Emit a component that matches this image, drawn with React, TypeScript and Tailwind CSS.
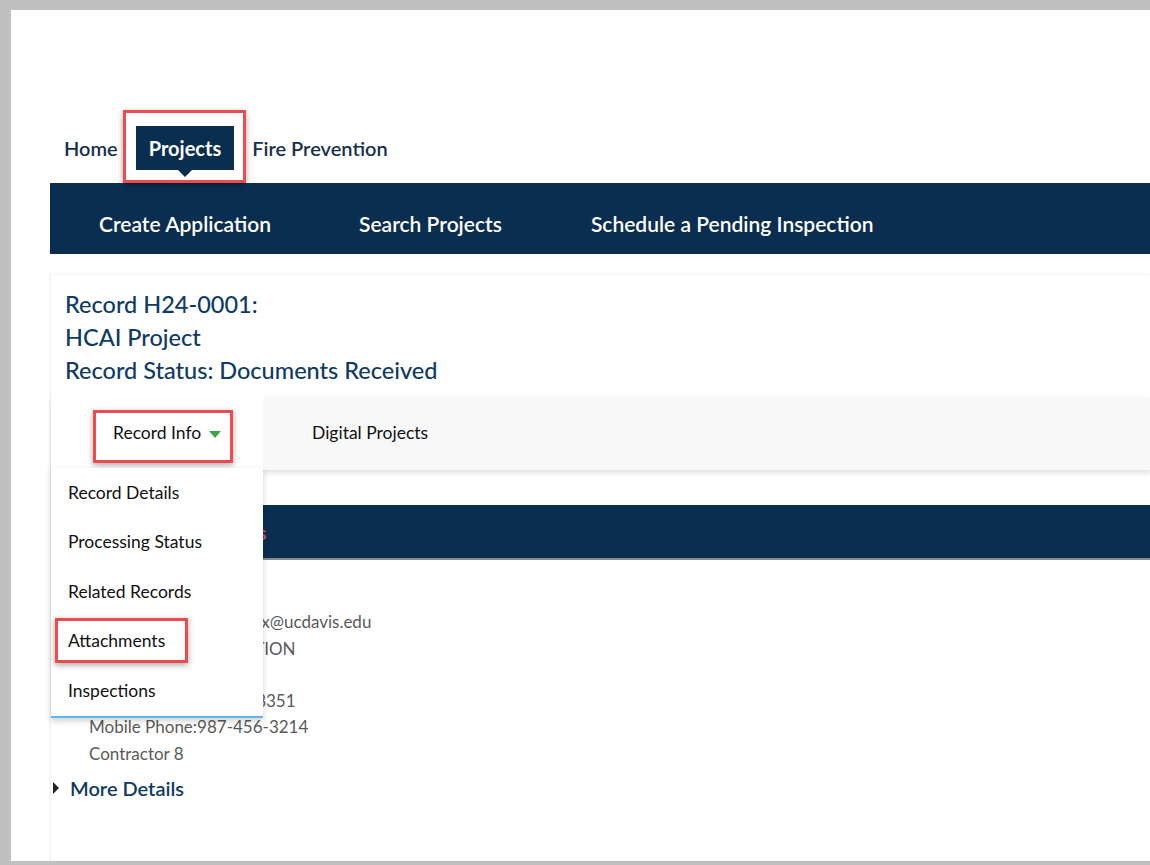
const NAVY = "bg-[#0a2e4f]";

const menuItems = [
  "Record Details",
  "Processing Status",
  "Related Records",
  "Attachments",
  "Inspections"
];

function Highlight({ className }: { className: string }) {
  return (
    <span
      className={`pointer-events-none absolute border-[3px] border-[#ec4b4f] shadow-[0_2px_6px_rgba(0,0,0,0.35)] ${className}`}
    />
  );
}

function RecordInfoMenu() {
  return (
    <div className="relative z-10 w-[212px] self-stretch bg-white">
      <div className="relative flex h-full items-center pl-[62px] text-[17.5px] text-[#111]">
        <span>Record Info</span>
        <span className="ml-[8px] mt-[2px] h-0 w-0 border-x-[6px] border-t-[7px] border-x-transparent border-t-[#3aa64a]" />
        <Highlight className="left-[42px] right-[30px] top-[13px] bottom-[7px]" />
      </div>
      <ul className="absolute left-0 top-[71px] w-full border-b-2 border-[#5ab8ea] bg-white shadow-[0_3px_6px_rgba(0,0,0,0.18)]">
        {menuItems.map((item) => (
          <li
            key={item}
            className="relative flex h-[49.5px] items-center pl-[17px] text-[17.5px] text-[#111]"
          >
            {item}
            {item === "Attachments" ? (
              <Highlight className="left-[4px] top-[1px] h-[45px] w-[133px]" />
            ) : null}
          </li>
        ))}
      </ul>
    </div>
  );
}

export default function App() {
  return (
    <div
      className="h-[865px] w-[1150px] overflow-hidden bg-[#c0c0c0] pb-[4px] pl-[11px] pt-[10px]"
      style={{ fontFamily: "Lato, 'Open Sans', sans-serif" }}
    >
      <div className="flex h-full flex-col bg-white pl-[39px]">
        {/* top level tabs */}
        <nav className="mt-[116px] flex h-[44px] items-center text-[20px] font-semibold text-[#16304d]">
          <span className="pl-[14px] pr-[18px]">Home</span>
          <span className="relative flex h-[44px] items-center bg-[#0a2e4f] px-[13px] font-bold text-white">
            Projects
            <span className="absolute left-1/2 top-full h-0 w-0 -translate-x-1/2 border-x-[7px] border-t-[7px] border-x-transparent border-t-[#0a2e4f]" />
            <Highlight className="-left-[13px] -right-[12px] -top-[16px] -bottom-[13px]" />
          </span>
          <span className="ml-[18px]">Fire Prevention</span>
        </nav>

        {/* projects sub menu */}
        <div className={`mt-[13px] flex h-[71px] items-center pl-[5px] pt-[11px] text-[21px] font-semibold text-white ${NAVY}`}>
          <span className="px-[44px]">Create Application</span>
          <span className="px-[44px]">Search Projects</span>
          <span className="px-[45px]">Schedule a Pending Inspection</span>
        </div>

        <div className="mt-[21px] flex flex-1 flex-col border-l border-[#f1f1f1] shadow-[0_-1px_3px_rgba(0,0,0,0.06)]">
          <div className="pb-[10px] pl-[14px] pt-[13px] text-[23.5px] font-medium leading-[33px] text-[#0f3a63]">
            <div>Record H24-0001:</div>
            <div>HCAI Project</div>
            <div>Record Status: Documents Received</div>
          </div>

          {/* record tabs */}
          <div className="flex h-[73px] items-center bg-[#f8f8f8] shadow-[0_3px_5px_rgba(0,0,0,0.12)]">
            <RecordInfoMenu />
            <span className="ml-[49px] text-[17.5px] text-[#111]">Digital Projects</span>
          </div>

          <div className={`mt-[35px] flex h-[55px] items-center border-b-2 border-[#8a8a8a] pl-[17px] text-[20px] font-semibold text-[#d9525a] ${NAVY}`}>
            Licensed Professionals
          </div>

          <div className="pt-[23px] text-[17px] leading-[26.3px] text-[#5a5a5a]">
            <div className="pl-[17px] font-semibold text-[#222]">Licensed Professional:</div>
            <div className="pl-[38px]">
              <div>hcaigeneralcontractor1x@ucdavis.edu</div>
              <div>FACILITY CONSTRUCTION</div>
              <div>One Shields Avenue</div>
              <div>Home Phone:530-7528351</div>
              <div>Mobile Phone:987-456-3214</div>
              <div>Contractor 8</div>
            </div>
          </div>

          <div className="mt-[6px] flex items-center text-[20px] font-semibold text-[#0f3a63]">
            <span className="ml-[2px] h-0 w-0 border-y-[6px] border-l-[6px] border-y-transparent border-l-[#222]" />
            <span className="ml-[11px]">More Details</span>
          </div>
        </div>
      </div>
    </div>
  );
}
